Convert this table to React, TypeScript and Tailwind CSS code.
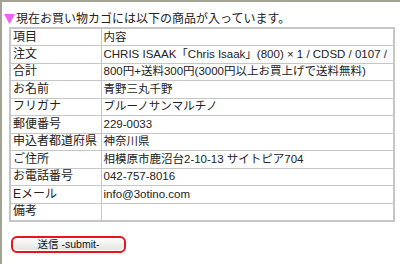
import React from "react";

const rows: [string, string][] = [
  ["項目", "内容"],
  ["注文", "CHRIS ISAAK「Chris Isaak」(800) × 1 / CDSD / 0107 /"],
  ["合計", "800円+送料300円(3000円以上お買上げで送料無料)"],
  ["お名前", "青野三丸千野"],
  ["フリガナ", "ブルーノサンマルチノ"],
  ["郵便番号", "229-0033"],
  ["申込者都道府県", "神奈川県"],
  ["ご住所", "相模原市鹿沼台2-10-13 サイトピア704"],
  ["お電話番号", "042-757-8016"],
  ["Eメール", "info@3otino.com"],
  ["備考", ""],
];

export default function App() {
  return (
    <div
      className="h-[264px] w-[400px] overflow-hidden border-l-2 border-t-2 border-[#a3a393] bg-white text-[#222]"
      style={{ fontFamily: '"Liberation Sans", "Noto Sans CJK JP", sans-serif' }}
    >
      <div className="flex h-[25px] items-end pl-[2px] text-[12px] leading-[16px]">
        <svg width="11" height="10" viewBox="0 0 11 10" className="mb-[3px] mr-[1px]">
          <polygon points="0,0 11,0 5.5,10" fill="#f55ff5" />
        </svg>
        <span>現在お買い物カゴには以下の商品が入っています。</span>
      </div>
      <table className="ml-[7px] w-[386px] table-fixed border-collapse border-2 border-[#c6c6c6] text-[12px]">
        <tbody>
          {rows.map(([label, value]) => (
            <tr key={label} className="h-[17.5px]">
              <td className="w-[91px] border border-[#c6c6c6] px-[2px] py-0 leading-[15px]">{label}</td>
              <td className="overflow-hidden whitespace-nowrap border border-[#c6c6c6] px-[2px] py-0 text-[11.5px] leading-[15px]">
                {value}
              </td>
            </tr>
          ))}
        </tbody>
      </table>
      <div className="ml-[9px] mt-[14px] flex h-[17px] w-[115px] rounded-[6px] border-2 border-[#e8131b] p-[1px]">
        <button className="flex flex-1 items-center justify-center rounded-[4px] bg-gradient-to-b from-[#fbfbfa] to-[#e6e5df] text-[10.5px] leading-none text-[#111]">
          送信 -submit-
        </button>
      </div>
    </div>
  );
}
